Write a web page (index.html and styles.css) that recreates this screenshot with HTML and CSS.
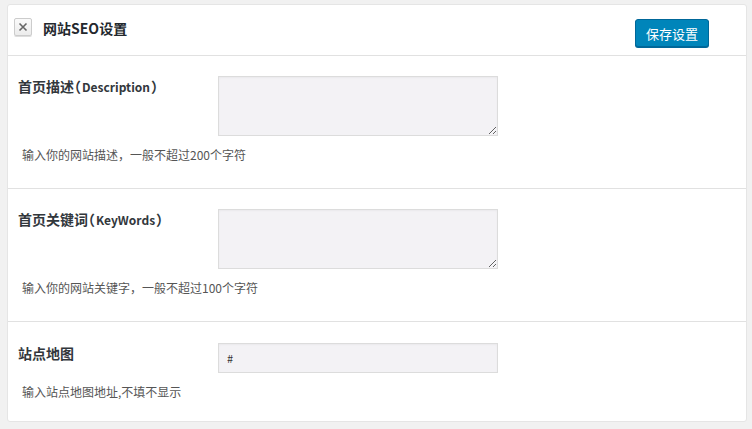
FILE: index.html
```html
<!DOCTYPE html>
<html lang="zh-CN">
<head>
<meta charset="utf-8">
<title>网站SEO设置</title>
<link rel="stylesheet" href="styles.css">
</head>
<body>
<div class="card">
  <div class="header">
    <span class="close"><svg width="10" height="10" viewBox="0 0 10 10"><path d="M1.5 1.5 L8.5 8.5 M8.5 1.5 L1.5 8.5" stroke="#666" stroke-width="1.6" fill="none"/></svg></span>
    <h2 class="title">网站SEO设置</h2>
    <button class="save">保存设置</button>
  </div>
  <div class="section">
    <div class="row">
      <label class="label">首页描述<span class="pn">（</span><span class="en">Description</span><span class="pn">）</span></label>
      <textarea class="field area"></textarea>
    </div>
    <p class="help">输入你的网站描述，一般不超过200个字符</p>
  </div>
  <div class="section">
    <div class="row">
      <label class="label">首页关键词<span class="pn">（</span><span class="en">KeyWords</span><span class="pn">）</span></label>
      <textarea class="field area"></textarea>
    </div>
    <p class="help">输入你的网站关键字，一般不超过100个字符</p>
  </div>
  <div class="section last">
    <div class="row">
      <label class="label">站点地图</label>
      <input class="field input" type="text" value="#">
    </div>
    <p class="help">输入站点地图地址,不填不显示</p>
  </div>
</div>
</body>
</html>
```

FILE: styles.css
```css
* { box-sizing: border-box; }
html, body {
  margin: 0;
  background: #f1f1f1;
}
body {
  padding: 4px 5px 7px 7px;
  font-family: "Noto Sans CJK SC", "Noto Sans", sans-serif;
  color: #23282d;
}
.card {
  width: 740px;
  height: 418px;
  background: #fff;
  border: 1px solid #e5e5e5;
  border-radius: 3px;
}
.header {
  display: flex;
  align-items: flex-start;
  height: 51px;
  padding: 13px 37px 0 6px;
  border-bottom: 1px solid #e1e1e1;
}
.close {
  width: 18px;
  height: 18px;
  display: flex;
  align-items: center;
  justify-content: center;
  border: 1px solid #cccccc;
  background: linear-gradient(#fafafa, #ececec);
  border-radius: 2px;
  box-shadow: 0 1px 0 #ddd;
}
.close svg { display: block; }
.title {
  margin: 0 0 0 11px;
  font-size: 14px;
  line-height: 20px;
  font-weight: bold;
  color: #23282d;
}
.save {
  margin-left: auto;
  margin-top: 1px;
  width: 74px;
  height: 28px;
  padding: 0;
  border: 1px solid #006799;
  border-radius: 3px;
  background: #0085ba;
  color: #fff;
  font-family: inherit;
  font-size: 13px;
  box-shadow: 0 1px 0 #006799;
}
.section {
  padding: 20px 0 24px 0;
  border-bottom: 1px solid #e1e1e1;
}
.section.last {
  border-bottom: none;
  padding-top: 21px;
}
.row {
  display: flex;
  align-items: flex-start;
}
.label {
  width: 210px;
  padding-left: 10px;
  font-size: 14px;
  line-height: 20px;
  font-weight: bold;
  color: #32373c;
  flex: none;
}
.label .en {
  font-size: 12px;
  margin: 0 1px;
}
.label .pn {
  font-feature-settings: "halt";
}
.field {
  width: 280px;
  background: #f3f2f5;
  border: 1px solid #dcdcdc;
  box-shadow: inset 0 1px 2px rgba(0,0,0,0.04);
  margin: 0;
  font-family: inherit;
  color: #333;
}
.area {
  height: 60px;
  resize: vertical;
}
.input {
  height: 30px;
  font-size: 11px;
  padding: 0 8px;
}
.help {
  margin: 10px 0 0 14px;
  font-size: 12px;
  line-height: 18px;
  color: #555;
}
```
